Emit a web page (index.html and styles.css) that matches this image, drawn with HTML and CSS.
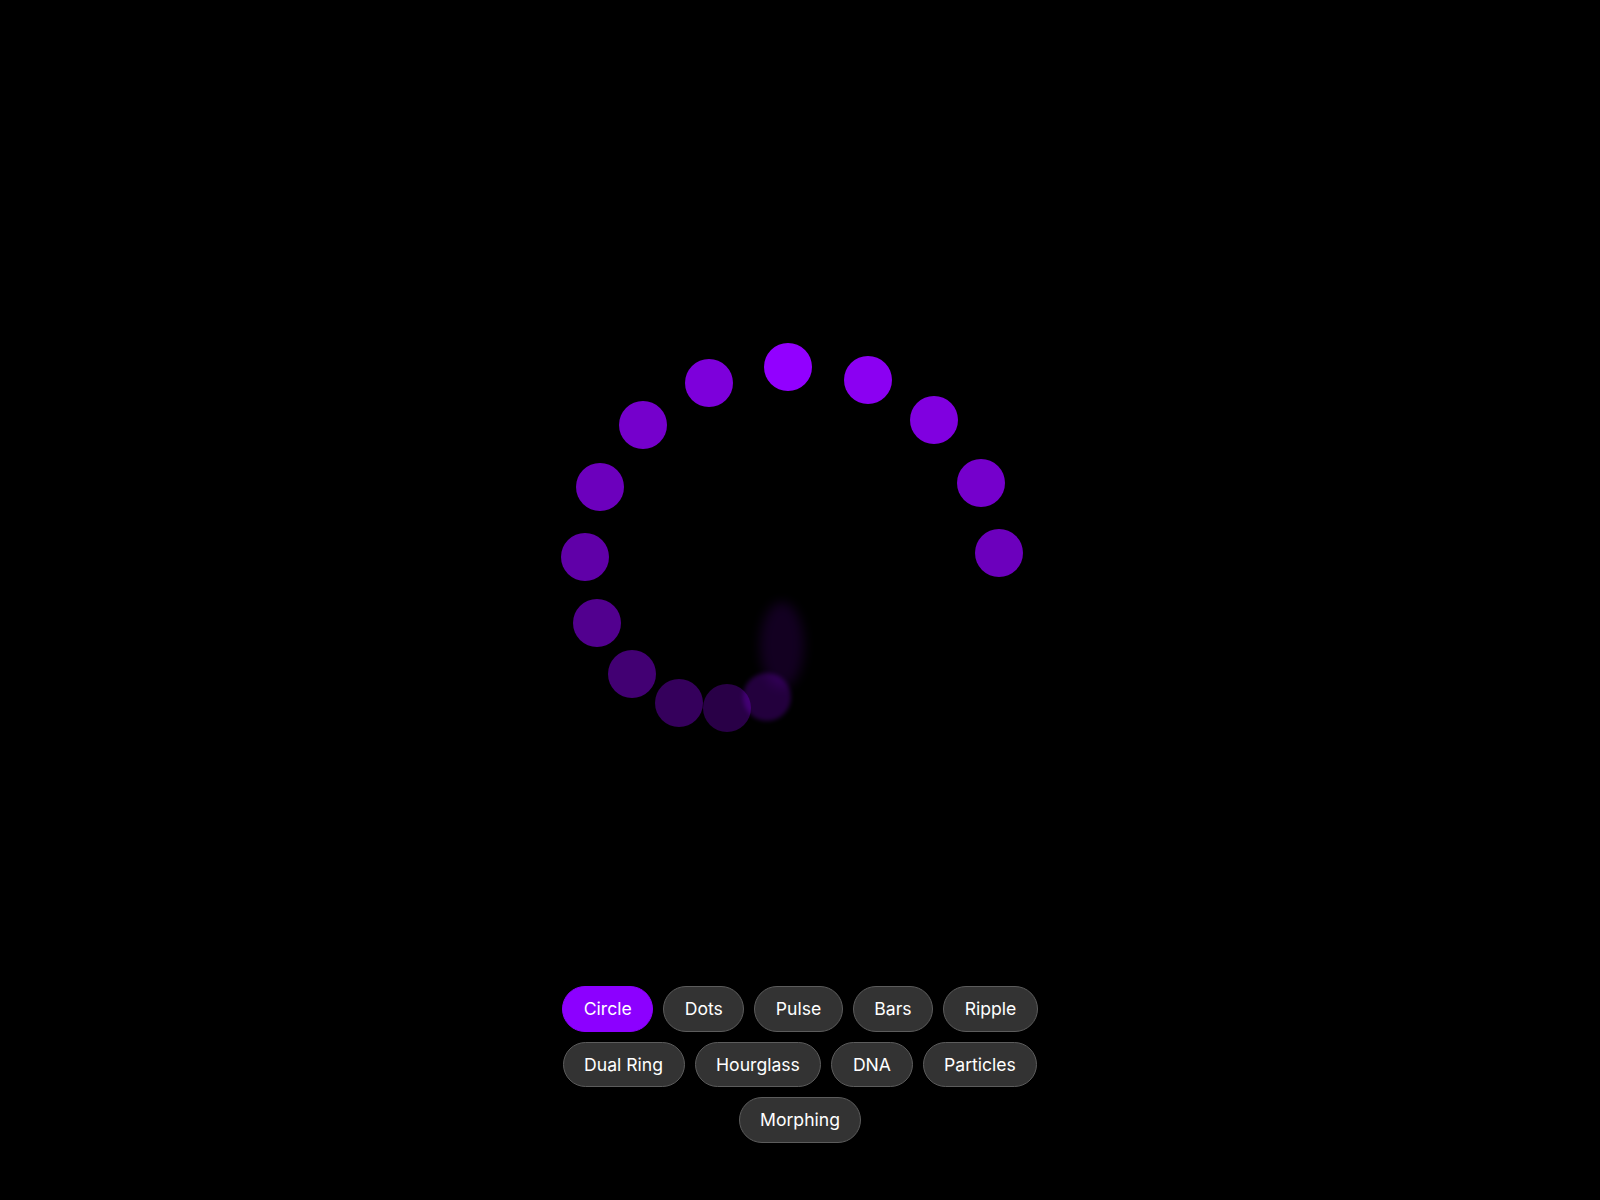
FILE: index.html
```html
<!DOCTYPE html>
<html lang="en">
<head>
<meta charset="utf-8">
<title>Loaders</title>
<link rel="stylesheet" href="styles.css">
</head>
<body>
<div class="app">
  <div class="stage">
    <div class="spinner">
      <span class="dot" style="left:194px;top:3px;opacity:1"></span>
      <span class="dot" style="left:274px;top:16px;opacity:0.95"></span>
      <span class="dot" style="left:340px;top:56px;opacity:0.88"></span>
      <span class="dot" style="left:387px;top:119px;opacity:0.8"></span>
      <span class="dot" style="left:405px;top:189px;opacity:0.74"></span>
      <span class="dot" style="left:115px;top:19px;opacity:0.86"></span>
      <span class="dot" style="left:49px;top:61px;opacity:0.8"></span>
      <span class="dot" style="left:6px;top:123px;opacity:0.74"></span>
      <span class="dot" style="left:-9px;top:193px;opacity:0.66"></span>
      <span class="dot" style="left:3px;top:259px;opacity:0.56"></span>
      <span class="dot" style="left:38px;top:310px;opacity:0.45"></span>
      <span class="dot" style="left:85px;top:339px;opacity:0.36"></span>
      <span class="dot" style="left:133px;top:344px;opacity:0.28"></span>
      <span class="dot blur" style="left:173px;top:333px;opacity:0.24"></span>
      <span class="streak"></span>
    </div>
  </div>
  <div class="controls">
    <button class="pill active">Circle</button>
    <button class="pill">Dots</button>
    <button class="pill">Pulse</button>
    <button class="pill">Bars</button>
    <button class="pill">Ripple</button>
    <button class="pill">Dual Ring</button>
    <button class="pill">Hourglass</button>
    <button class="pill">DNA</button>
    <button class="pill">Particles</button>
    <button class="pill">Morphing</button>
  </div>
</div>
</body>
</html>
```
FILE: styles.css
```css
html, body {
  margin: 0;
  padding: 0;
  background: #000;
}
body {
  font-family: Inter, "Noto Sans", "Liberation Sans", sans-serif;
  color: #fff;
}
.app {
  width: 1600px;
  height: 1200px;
  display: flex;
  flex-direction: column;
  align-items: center;
}
.stage {
  width: 100%;
  height: 986px;
  box-sizing: border-box;
  padding-top: 340px;
  display: flex;
  justify-content: center;
  align-items: flex-start;
}
.spinner {
  position: relative;
  width: 460px;
  height: 400px;
}
.dot {
  position: absolute;
  width: 48px;
  height: 48px;
  border-radius: 50%;
  background: #9200ff;
}
.dot.blur {
  filter: blur(2px);
}
.streak {
  position: absolute;
  left: 190px;
  top: 262px;
  width: 44px;
  height: 86px;
  border-radius: 50%;
  background: #9200ff;
  opacity: 0.13;
  filter: blur(6px);
}
.controls {
  width: 500px;
  display: flex;
  flex-wrap: wrap;
  justify-content: center;
  gap: 10px;
}
.pill {
  font-family: Inter, "Noto Sans", "Liberation Sans", sans-serif;
  font-size: 17.6px;
  line-height: 21.7px;
  color: #fff;
  background: #333;
  border: 1px solid #5c5c5c;
  border-radius: 999px;
  padding: 11px 20.5px;
  margin: 0;
  cursor: pointer;
}
.pill.active {
  background: #8c00ff;
  border-color: #8c00ff;
}
```
